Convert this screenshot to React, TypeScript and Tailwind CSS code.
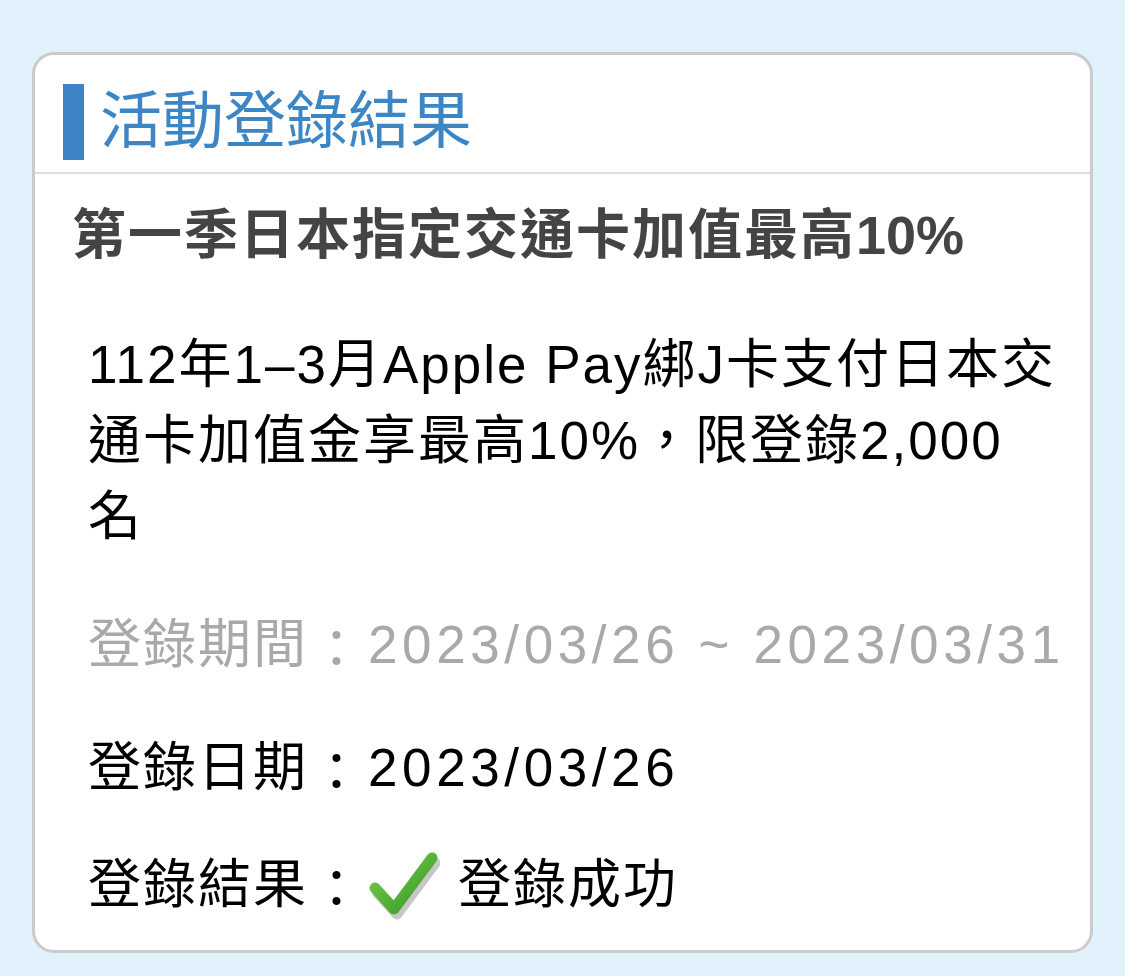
import React from 'react';

const font = { fontFamily: '"Liberation Sans", "Noto Sans CJK TC", sans-serif' };

const CheckMark: React.FC = () => (
  <svg width="72" height="70" viewBox="0 0 72 70" className="shrink-0">
    <defs>
      <linearGradient id="chk" x1="0" y1="0" x2="1" y2="1">
        <stop offset="0" stopColor="#7ccf50" />
        <stop offset="0.55" stopColor="#52b035" />
        <stop offset="1" stopColor="#3b9327" />
      </linearGradient>
    </defs>
    {/* shadow */}
    <polyline
      points="8,40 27,61 65,10"
      fill="none"
      stroke="#000"
      strokeOpacity="0.22"
      strokeWidth="11"
      strokeLinecap="round"
      strokeLinejoin="round"
      transform="translate(2,3)"
    />
    <polyline
      points="7,38 26,59 64,8"
      fill="none"
      stroke="url(#chk)"
      strokeWidth="11"
      strokeLinecap="round"
      strokeLinejoin="round"
    />
  </svg>
);

const Colon: React.FC = () => (
  <span className="inline-block translate-y-[5px] ml-[2px] mr-[3px]">：</span>
);

export default function App() {
  return (
    <div className="min-h-screen bg-[#e2f2fd] pt-[52px] pb-[25px] px-[32px]" style={font}>
      <div className="bg-white border-[3px] border-[#cbcbcb] rounded-[22px] overflow-hidden">
        {/* Header */}
        <div className="h-[119px] border-b-2 border-[#dedede] flex items-start pl-[28px] pt-[29px]">
          <div className="w-[21px] h-[76px] bg-[#3d84c6]" />
          <h1 className="ml-[16px] text-[62px] leading-[76px] text-[#3d86c6]">活動登錄結果</h1>
        </div>

        {/* Body */}
        <div className="pl-[37px] pr-[10px] pt-[28px] pb-[27px]">
          <h2 className="text-[54px] leading-[67px] font-bold text-[#444] tracking-[2px] whitespace-nowrap">
            第一季日本指定交通卡加值最高<span className="tracking-[0px]">10%</span>
          </h2>

          <div className="pl-[16px] mt-[58px]">
            <p className="text-[53px] leading-[76px] text-black tracking-[2px]">
              112年1–3月Apple Pay綁J卡支付日本交
              <br />
              通卡加值金享最高10%，限登錄2,000
              <br />
              名
            </p>

            <p className="mt-[52px] text-[53px] leading-[76px] text-[#a9a9a9] tracking-[2px] whitespace-nowrap">
              登錄期間<Colon /><span className="tracking-[4.6px]">2023/03/26 ~ 2023/03/31</span>
            </p>

            <p className="mt-[47px] text-[53px] leading-[76px] text-black tracking-[2px]">
              登錄日期<Colon /><span className="tracking-[4.6px]">2023/03/26</span>
            </p>

            <div className="mt-[41px] flex items-center text-[53px] leading-[76px] text-black tracking-[2px]">
              <span>
                登錄結果<Colon />
              </span>
              <span className="mr-[18px]">
                <CheckMark />
              </span>
              <span>登錄成功</span>
            </div>
          </div>
        </div>
      </div>
    </div>
  );
}
